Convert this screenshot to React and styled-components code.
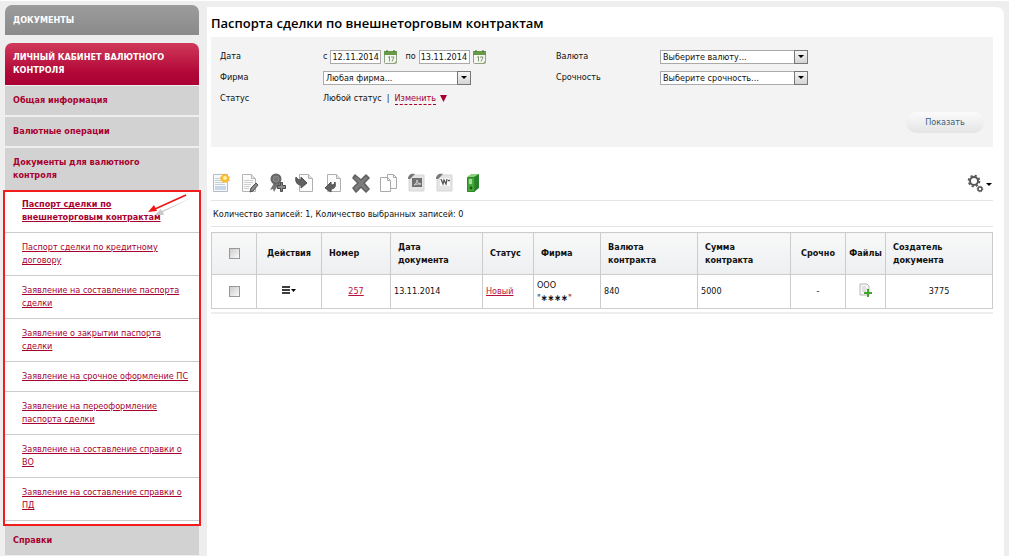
import React from 'react';
import styled, { createGlobalStyle } from 'styled-components';

const docLinks = [
  { text: 'Паспорт сделки по внешнеторговым контрактам', active: true },
  { text: 'Паспорт сделки по кредитному договору' },
  { text: 'Заявление на составление паспорта сделки' },
  { text: 'Заявление о закрытии паспорта сделки' },
  { text: 'Заявление на срочное оформление ПС' },
  { text: 'Заявление на переоформление паспорта сделки' },
  { text: 'Заявление на составление справки о ВО' },
  { text: 'Заявление на составление справки о ПД' },
];

const Page = ({ children }) => (
  <>
    <path d="M4.500 1.500h9l4 4v13h-13z" fill="#fbfbfb" stroke="#b0b0b0" />
    <path d="M13.500 1.500v4h4" fill="#e4e4e4" stroke="#b0b0b0" />
    {children}
  </>
);

const tools = [
  {
    label: 'Создать',
    icon: (
      <>
        <path d="M2.500 1.500h14v17h-14z" fill="#f6f8fa" stroke="#b5bcc4" />
        <path d="M4 5.500h6M4 7.500h7M4 9.500h10M4 11.500h10" stroke="#c6ced6" />
        <path d="M4 13h11v4H4z" fill="#c4d9ec" />
        <path
          d="M14 0l1 2 2-1v2l2 1-1 2 1 2h-2l-1 2-2-1-2 1-1-2h-2l1-2-1-2 2-1V1l2 1z"
          fill="#f8bd2e"
        />
        <circle cx="14" cy="5" r="2" fill="#fff0a8" />
      </>
    ),
  },
  {
    label: 'Редактировать',
    icon: (
      <>
        <path d="M3.500 1.500h9l4 4v13h-13z" fill="#fbfbfb" stroke="#b4b4b4" />
        <path d="M12.500 1.500v4h4" fill="#e4e4e4" stroke="#b4b4b4" />
        <path d="M5 7.500h9M5 9.500h9M5 11.500h7M5 13.500h6M5 15.500h5" stroke="#cdd0d3" />
        <path d="M11 19l1-4 5-5 2 2-5 6z" fill="#8a8a8a" stroke="#505050" />
      </>
    ),
  },
  {
    label: 'Подписать',
    icon: (
      <>
        <path d="M7 10L3 17l3-1 1 3 4-7 3 6V9z" fill="#747474" />
        <circle cx="9" cy="6" r="5.500" fill="#666" />
        <circle cx="9" cy="6" r="3" fill="#777" stroke="#8c8c8c" />
        <path
          d="M13.500 9.500h2v3h3v3h-3v3h-2v-3h-3v-3h3z"
          fill="#8c8c8c"
          stroke="#4a4a4a"
        />
      </>
    ),
  },
  {
    label: 'Импорт',
    icon: (
      <>
        <Page />
        <path
          d="M1 4c1 2 3 3 5 3V4l6 6-6 5v-3c-4 0-6-3-5-8z"
          fill="#606060"
          stroke="#505050"
          strokeLinejoin="round"
        />
      </>
    ),
  },
  {
    label: 'Экспорт',
    icon: (
      <>
        <Page />
        <path
          d="M12 9c0 2-2 3-4 3V9l-6 6 6 4v-3c4 0 5-3 4-7z"
          fill="#606060"
          stroke="#505050"
          strokeLinejoin="round"
        />
      </>
    ),
  },
  {
    label: 'Удалить',
    icon: (
      <path
        d="M4 2l6 5 5-5 3 3-5 5 5 6-3 3-5-5-5 5-3-4 5-5-5-5z"
        fill="#7c7c7c"
        stroke="#626262"
        strokeWidth="1.600"
        strokeLinejoin="round"
      />
    ),
  },
  {
    label: 'Копировать',
    icon: (
      <>
        <path d="M8.500 1.500h6l3 3v11h-9z" fill="#fafafa" stroke="#aaa" />
        <path d="M14.500 1.500v3h3" fill="none" stroke="#aaa" />
        <path d="M1.500 4.500h7l3 3v11h-10z" fill="#fff" stroke="#aaa" />
        <path d="M8.500 4.500v3h3" fill="none" stroke="#aaa" />
      </>
    ),
  },
  {
    label: 'Выгрузить в PDF',
    icon: (
      <>
        <path d="M7 2h10v16H2V7z" fill="#e4e4e4" stroke="#d6d6d6" />
        <path d="M1 6c0-4 3-6 7-5L3 6z" fill="#777" />
        <path d="M5 5h10v9H5z" fill="#707070" />
        <path d="M7 12c2-1 3-3 3-5 0 2 1 4 4 4-3 0-5 0-7 1z" fill="none" stroke="#d8d8d8" />
      </>
    ),
  },
  {
    label: 'Выгрузить в Word',
    icon: (
      <>
        <path d="M7 2h10v16H2V7z" fill="#e4e4e4" stroke="#d6d6d6" />
        <path d="M1 6c0-4 3-6 7-5L3 6z" fill="#777" />
        <path d="M5 5h10v8H5z" fill="#fbfbfb" />
        <path d="M6 6l2 5 1-4 2 4 1-5M13 7.500h2" fill="none" stroke="#555" strokeWidth="1.300" />
      </>
    ),
  },
  {
    label: 'Архив',
    icon: (
      <>
        <path d="M4 4l4-3h8l-4 3z" fill="#8fd07a" />
        <path d="M11 4l5-3v14l-5 4z" fill="#27812a" />
        <path d="M4.500 4.500h7v14h-7z" fill="#45a83c" stroke="#2b8a25" />
        <path d="M6 6h3v5H6z" fill="#a5db98" />
        <circle cx="8" cy="15" r="1.400" fill="#185c14" />
      </>
    ),
  },
];

const CalendarButton = ({ label }) => (
  <PlainButton aria-label={label}>
    <svg width="14" height="14" viewBox="0 0 14 14">
      <rect x="0.500" y="1.500" width="12" height="12" rx="1" fill="#f4f6f0" stroke="#91a184" />
      <path d="M0 1h13v4H0z" fill="#669a49" />
      <path d="M3 0v2M10 0v2" stroke="#3c6727" />
      <path d="M4 7.500l1.500-1v5M7 7h3l-2 4.500" fill="none" stroke="#82957a" />
      <path d="M10 13l3-3v3z" fill="#8fb573" />
    </svg>
  </PlainButton>
);

const Dropdown = ({ id, value }) => (
  <SelectBox>
    <Select id={id} defaultValue={value}>
      <option>{value}</option>
    </Select>
    <SelectArrow>
      <svg width="6" height="3" viewBox="0 0 6 3">
        <path d="M0 0h6L3 3z" fill="#000" />
      </svg>
    </SelectArrow>
  </SelectBox>
);

export default () => {
  return (
    <Layout>
      <GlobalStyle />
      <Sidebar>
        <SectionTitle>ДОКУМЕНТЫ</SectionTitle>
        <SectionTitle $active>ЛИЧНЫЙ КАБИНЕТ ВАЛЮТНОГО КОНТРОЛЯ</SectionTitle>
        <MenuLink href="#info">Общая информация</MenuLink>
        <MenuLink href="#operations">Валютные операции</MenuLink>
        <MenuLink href="#documents">Документы для валютного контроля</MenuLink>
        <Submenu>
          {docLinks.map((link) => (
            <SubmenuItem key={link.text}>
              <SubmenuLink href="#doc" $active={link.active}>
                {link.text}
              </SubmenuLink>
            </SubmenuItem>
          ))}
          <Highlight />
          <Pointer width="48" height="28" viewBox="0 0 48 28">
            <path d="M46 5L18 19l1 3-9 0 6-6 1 2z" fill="#bbb" opacity="0.800" />
            <path d="M41 2L10 16" stroke="#f01414" strokeWidth="1.600" />
            <path d="M3 19l6-7 3 6z" fill="#f01414" />
          </Pointer>
        </Submenu>
        <MenuLink href="#references">Справки</MenuLink>
      </Sidebar>

      <Main>
        <Title>Паспорта сделки по внешнеторговым контрактам</Title>

        <Filters>
          <FilterGrid>
            <label htmlFor="from">Дата</label>
            <FieldRow>
              <label htmlFor="from">с</label>
              <DateInput id="from" defaultValue="12.11.2014" />
              <CalendarButton label="Дата начала" />
              <ToLabel htmlFor="to">по</ToLabel>
              <DateInput id="to" defaultValue="13.11.2014" />
              <CalendarButton label="Дата окончания" />
            </FieldRow>
            <label htmlFor="currency">Валюта</label>
            <Dropdown id="currency" value="Выберите валюту..." />

            <label htmlFor="firm">Фирма</label>
            <Dropdown id="firm" value="Любая фирма..." />
            <label htmlFor="urgency">Срочность</label>
            <Dropdown id="urgency" value="Выберите срочность..." />

            <span>Статус</span>
            <FieldRow>
              <span>Любой статус</span>
              <Divider>|</Divider>
              <ChangeLink href="#status">Изменить</ChangeLink>
              <svg width="7" height="7" viewBox="0 0 7 7">
                <path d="M0 0h7L3.500 7z" fill="#a8002f" />
              </svg>
            </FieldRow>
          </FilterGrid>
          <ShowButton>Показать</ShowButton>
        </Filters>

        <Toolbar>
          {tools.map((tool) => (
            <PlainButton key={tool.label} aria-label={tool.label}>
              <svg width="20" height="20" viewBox="0 0 20 20">
                {tool.icon}
              </svg>
            </PlainButton>
          ))}
          <SettingsButton aria-label="Настройки">
            <svg width="26" height="20" viewBox="0 0 26 20">
              <circle cx="7" cy="8" r="4" fill="none" stroke="#555" strokeWidth="2" />
              <circle
                cx="7"
                cy="8"
                r="5.500"
                fill="none"
                stroke="#555"
                strokeWidth="1.600"
                strokeDasharray="2.200 2.120"
              />
              <circle cx="13" cy="16" r="2" fill="none" stroke="#555" strokeWidth="1.400" />
              <circle
                cx="13"
                cy="16"
                r="2.800"
                fill="none"
                stroke="#555"
                strokeDasharray="1.100 1.100"
              />
              <path d="M19 10h6l-3 3z" fill="#000" />
            </svg>
          </SettingsButton>
        </Toolbar>

        <Summary>Количество записей: 1, Количество выбранных записей: 0</Summary>

        <TableWrap>
          <Table>
            <colgroup>
              <col width="45" />
              <col width="65" />
              <col width="69" />
              <col width="92" />
              <col width="51" />
              <col width="67" />
              <col width="97" />
              <col width="93" />
              <col width="55" />
              <col width="40" />
              <col />
            </colgroup>
            <thead>
              <tr>
                <HeadCell $center>
                  <Checkbox type="checkbox" aria-label="Выбрать все" />
                </HeadCell>
                <HeadCell $center>Действия</HeadCell>
                <HeadCell>Номер</HeadCell>
                <HeadCell>
                  Дата
                  <br />
                  документа
                </HeadCell>
                <HeadCell>Статус</HeadCell>
                <HeadCell>Фирма</HeadCell>
                <HeadCell>Валюта контракта</HeadCell>
                <HeadCell>Сумма контракта</HeadCell>
                <HeadCell $center>Срочно</HeadCell>
                <HeadCell $center>Файлы</HeadCell>
                <HeadCell>
                  Создатель
                  <br />
                  документа
                </HeadCell>
              </tr>
            </thead>
            <tbody>
              <tr>
                <Cell $center>
                  <Checkbox type="checkbox" aria-label="Выбрать запись 257" />
                </Cell>
                <Cell $center>
                  <PlainButton aria-label="Действия">
                    <svg width="14" height="8" viewBox="0 0 14 8">
                      <path d="M0 1h8M0 4h8M0 7h8" stroke="#000" strokeWidth="1.600" />
                      <path d="M9 3h5l-2.500 3z" fill="#000" />
                    </svg>
                  </PlainButton>
                </Cell>
                <Cell $center>
                  <CellLink href="#257">257</CellLink>
                </Cell>
                <Cell>13.11.2014</Cell>
                <Cell>
                  <CellLink href="#new">Новый</CellLink>
                </Cell>
                <Cell>
                  ООО
                  <br />
                  "<b>∗∗∗∗</b>"
                </Cell>
                <Cell>840</Cell>
                <Cell>5000</Cell>
                <Cell $center>-</Cell>
                <Cell $center>
                  <PlainButton aria-label="Добавить файл">
                    <svg width="13" height="14" viewBox="0 0 13 14">
                      <path d="M1 1h7l2 2v9H1z" fill="#f7f7f7" stroke="#b5b5b5" />
                      <path d="M3 4h4M3 6h5M3 8h4" stroke="#cbcbcb" />
                      <path d="M8 6h2v3h3v2h-3v3H8v-3H5V9h3z" fill="#43a52c" />
                    </svg>
                  </PlainButton>
                </Cell>
                <Cell $center>3775</Cell>
              </tr>
            </tbody>
          </Table>
        </TableWrap>
      </Main>
    </Layout>
  );
};

const GlobalStyle = createGlobalStyle`
  * {
    box-sizing: border-box;
  }

  body {
    margin: 0;
    background: #eee;
    font: 9px/13px 'DejaVu Sans Condensed', 'DejaVu Sans', sans-serif;
    color: #111;
  }

  input,
  select,
  button {
    font: inherit;
    color: inherit;
  }
`;

const Layout = styled.div`
  display: flex;
  gap: 8px;
  min-height: 100vh;
  padding: 0 5px;
  border-top: 1px solid #fff;
  border-right: 2px solid #fff;
`;

const Sidebar = styled.nav`
  width: 194px;
  flex: none;
  padding-top: 4px;
`;

const SectionTitle = styled.div`
  margin-bottom: ${({ $active }) => ($active ? '1px' : '8px')};
  padding: 8px;
  border-radius: 7px 7px 0 0;
  background: ${({ $active }) =>
    $active
      ? 'linear-gradient(#d03a5a, #b20738 70%, #aa0033)'
      : 'linear-gradient(#9c9c9c, #8a8a8a)'};
  color: #fff;
  font-weight: bold;
  line-height: ${({ $active }) => ($active ? '13px' : '14px')};
`;

const MenuLink = styled.a`
  display: block;
  margin-bottom: 2px;
  padding: 8px 24px 8px 8px;
  background: #d2d2d2;
  color: #a8002f;
  font-weight: bold;
  text-decoration: none;
`;

const Submenu = styled.ul`
  position: relative;
  margin: -2px 0 0;
  padding: 0 0 5px;
  list-style: none;
  background: #fff;
`;

const SubmenuItem = styled.li`
  padding: 8px 6px 8px 17px;
  border-bottom: 1px solid #ccc;
`;

const SubmenuLink = styled.a`
  color: #a8002f;
  font-weight: ${({ $active }) => ($active ? 'bold' : 'normal')};
`;

const Highlight = styled.div`
  position: absolute;
  inset: 0 -2px;
  border: 2px solid #f21c1c;
  pointer-events: none;
`;

const Pointer = styled.svg`
  position: absolute;
  top: 3px;
  right: 6px;
  pointer-events: none;
`;

const Main = styled.main`
  flex: 1;
  min-width: 0;
  margin-top: 6px;
  padding: 7px 8px 0 4px;
  border-right: 3px double #fff;
  border-radius: 0 8px 0 0;
  background: #fff;
`;

const Title = styled.h1`
  margin: 0 0 5px;
  font-family: 'Open Sans', sans-serif;
  font-size: 13px;
  font-weight: 600;
  line-height: 18px;
  color: #000;
`;

const Filters = styled.section`
  display: flex;
  flex-direction: column;
  padding: 9px;
  background: #f3f3f3;
`;

const FilterGrid = styled.div`
  display: grid;
  grid-template-columns: 103px 233px 104px 1fr;
  grid-auto-rows: 21px;
  align-items: center;
`;

const FieldRow = styled.div`
  display: flex;
  align-items: center;
  gap: 3px;
`;

const ToLabel = styled.label`
  margin: 0 0 0 4px;
`;

const DateInput = styled.input`
  width: 51px;
  height: 14px;
  padding: 0 1px;
  border: 1px solid #aaa;
  background: #fff;
`;

const PlainButton = styled.button`
  display: inline-flex;
  padding: 0;
  border: 0;
  background: none;
`;

const SelectBox = styled.div`
  position: relative;
  width: 148px;
  height: 14px;
`;

const Select = styled.select`
  display: block;
  width: 100%;
  height: 100%;
  padding: 0 16px 0 2px;
  border: 1px solid #aaa;
  border-radius: 0;
  background: #fff;
  appearance: none;
`;

const SelectArrow = styled.span`
  position: absolute;
  top: 0;
  right: 0;
  bottom: 0;
  display: flex;
  align-items: center;
  justify-content: center;
  width: 14px;
  border: 1px solid #777;
  background: linear-gradient(#f6f6f6, #d4d4d4);
  pointer-events: none;
`;

const Divider = styled.span`
  margin: 0 2px;
`;

const ChangeLink = styled.a`
  margin-right: 1px;
  border-bottom: 1px dashed #a8002f;
  color: #a8002f;
  line-height: 11px;
  text-decoration: none;
`;

const ShowButton = styled.button`
  align-self: flex-end;
  width: 78px;
  height: 21px;
  margin: 3px 0 5px;
  padding: 0;
  border: 0;
  border-radius: 11px;
  background: linear-gradient(#fbfbfb, #e4e4e4);
  color: #41607c;
`;

const Toolbar = styled.div`
  display: flex;
  gap: 8px;
  padding: 26px 0 7px;
  border-bottom: 1px solid #e4e4e4;
`;

const SettingsButton = styled(PlainButton)`
  margin-left: auto;
`;

const Summary = styled.div`
  margin-bottom: 5px;
  padding: 7px 2px 5px;
  border-bottom: 1px solid #e4e4e4;
`;

const TableWrap = styled.div`
  padding-bottom: 3px;
  border-bottom: 2px solid #eee;
`;

const Table = styled.table`
  width: 100%;
  border-collapse: collapse;
  table-layout: fixed;
`;

const HeadCell = styled.th`
  height: 42px;
  padding: ${({ $center }) => ($center ? '0' : '0 7px')};
  border: 1px solid #ccc;
  background: linear-gradient(#f8f8f8, #edeff1);
  text-align: ${({ $center }) => ($center ? 'center' : 'left')};
`;

const Cell = styled.td`
  height: 34px;
  padding: 0 3px;
  border: 1px solid #ccc;
  text-align: ${({ $center }) => ($center ? 'center' : 'left')};
`;

const CellLink = styled.a`
  color: #b5123f;
`;

const Checkbox = styled.input`
  width: 11px;
  height: 11px;
  margin: 0;
  border: 1px solid #999;
  background: linear-gradient(135deg, #ccc, #fafafa);
  vertical-align: middle;
  appearance: none;
`;
